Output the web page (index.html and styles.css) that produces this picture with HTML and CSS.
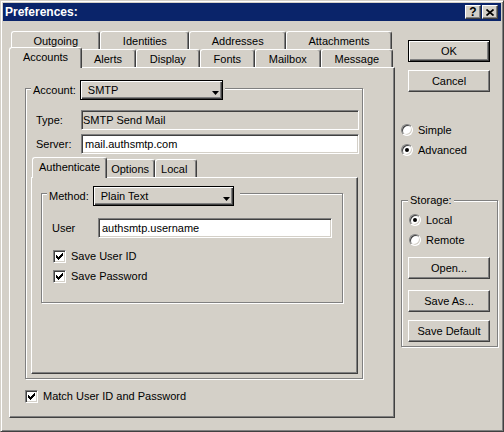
FILE: index.html
```html
<!DOCTYPE html>
<html lang="en">
<head>
    <meta charset="UTF-8">
    <meta name="viewport" content="width=device-width, initial-scale=1.0">
    <title>Preferences</title>
    <link rel="stylesheet" href="styles.css">
</head>
<body>
    <div class="window">
        <div class="titlebar">
            <span class="title">Preferences:</span>
            <div class="caption-buttons">
                <span class="cap-btn">?</span>
                <span class="cap-btn">
                    <svg width="8" height="7" viewBox="0 0 8 7"><path d="M0.5 0.5L7.5 6.5M7.5 0.5L0.5 6.5" stroke="#000" stroke-width="1.7"/></svg>
                </span>
            </div>
        </div>

        <div class="content">
            <div class="main">
                <div class="tab-row back">
                    <div class="tab">Outgoing</div>
                    <div class="tab">Identities</div>
                    <div class="tab">Addresses</div>
                    <div class="tab">Attachments</div>
                </div>
                <div class="tab-row front">
                    <div class="tab active">Accounts</div>
                    <div class="tab">Alerts</div>
                    <div class="tab">Display</div>
                    <div class="tab">Fonts</div>
                    <div class="tab">Mailbox</div>
                    <div class="tab">Message</div>
                </div>

                <div class="panel">
                    <div class="group account">
                        <div class="group-head">
                            <span>Account:</span>
                            <div class="dropdown account-select">
                                <span>SMTP</span>
                                <svg class="arrow" width="7" height="4" viewBox="0 0 7 4"><path d="M0 0h7L3.5 4z"/></svg>
                            </div>
                        </div>
                        <div class="field-row first">
                            <span class="field-label">Type:</span>
                            <input class="field readonly" value="SMTP Send Mail" readonly>
                        </div>
                        <div class="field-row">
                            <span class="field-label">Server:</span>
                            <input class="field" value="mail.authsmtp.com">
                        </div>

                        <div class="itab-row">
                            <div class="itab active">Authenticate</div>
                            <div class="itab">Options</div>
                            <div class="itab">Local</div>
                        </div>
                        <div class="ipanel">
                            <div class="group method">
                                <div class="group-head wide">
                                    <span>Method:</span>
                                    <div class="dropdown method-select">
                                        <span>Plain Text</span>
                                        <svg class="arrow" width="7" height="4" viewBox="0 0 7 4"><path d="M0 0h7L3.5 4z"/></svg>
                                    </div>
                                </div>
                                <div class="user-row">
                                    <span class="user-label">User</span>
                                    <input class="field user-field" value="authsmtp.username">
                                </div>
                                <div class="check-row save-id">
                                    <span class="check"><svg width="11" height="11" viewBox="0 0 11 11"><path d="M2 4h1v3h-1zM3 5h1v3h-1zM4 6h1v3h-1zM5 5h1v3h-1zM6 4h1v3h-1zM7 3h1v3h-1zM8 2h1v3h-1z"/></svg></span>
                                    <span>Save User ID</span>
                                </div>
                                <div class="check-row save-pw">
                                    <span class="check"><svg width="11" height="11" viewBox="0 0 11 11"><path d="M2 4h1v3h-1zM3 5h1v3h-1zM4 6h1v3h-1zM5 5h1v3h-1zM6 4h1v3h-1zM7 3h1v3h-1zM8 2h1v3h-1z"/></svg></span>
                                    <span>Save Password</span>
                                </div>
                            </div>
                        </div>
                    </div>

                    <div class="check-row match">
                        <span class="check"><svg width="11" height="11" viewBox="0 0 11 11"><path d="M2 4h1v3h-1zM3 5h1v3h-1zM4 6h1v3h-1zM5 5h1v3h-1zM6 4h1v3h-1zM7 3h1v3h-1zM8 2h1v3h-1z"/></svg></span>
                        <span>Match User ID and Password</span>
                    </div>
                </div>
            </div>

            <div class="side">
                <div class="btn default btn-ok">OK</div>
                <div class="btn btn-cancel">Cancel</div>

                <div class="radio-row mode-simple">
                    <span class="radio"></span>
                    <span>Simple</span>
                </div>
                <div class="radio-row">
                    <span class="radio on"></span>
                    <span>Advanced</span>
                </div>

                <div class="group storage">
                    <div class="group-head">Storage:</div>
                    <div class="radio-row first">
                        <span class="radio on"></span>
                        <span>Local</span>
                    </div>
                    <div class="radio-row">
                        <span class="radio"></span>
                        <span>Remote</span>
                    </div>
                    <div class="btn btn-open">Open...</div>
                    <div class="btn btn-saveas">Save As...</div>
                    <div class="btn btn-savedefault">Save Default</div>
                </div>
            </div>
        </div>
    </div>
</body>
</html>
```

FILE: styles.css
```css
body {
    margin: 0;
    font-family: "Liberation Sans", Arial, sans-serif;
    font-size: 11px;
    line-height: 13px;
    color: #000;
    background: #d4d0c8;
}
.window {
    width: 504px;
    height: 432px;
    box-sizing: border-box;
    display: flex;
    flex-direction: column;
    padding: 2px;
    border: 1px solid;
    border-color: #d4d0c8 #404040 #404040 #d4d0c8;
    box-shadow: inset 1px 1px #fff, inset -1px -1px #808080;
    background: #d4d0c8;
}

/* title bar */
.titlebar {
    flex: none;
    height: 18px;
    display: flex;
    align-items: center;
    justify-content: space-between;
    padding: 0 3px 0 2px;
    background: #0a246a;
}
.title {
    color: #fff;
    font-weight: bold;
    font-size: 12px;
}
.caption-buttons {
    display: flex;
    gap: 1px;
}
.cap-btn {
    width: 16px;
    height: 14px;
    box-sizing: border-box;
    display: flex;
    align-items: center;
    justify-content: center;
    background: #d4d0c8;
    border: 1px solid;
    border-color: #fff #404040 #404040 #fff;
    box-shadow: inset -1px -1px #808080;
    font-weight: bold;
    font-size: 12px;
}

.content {
    flex: 1;
    display: flex;
    gap: 6px;
    padding: 10px 3px 11px 6px;
}
.main {
    width: 386px;
    display: flex;
    flex-direction: column;
}
.side {
    width: 97px;
}

/* tabs */
.tab-row {
    display: flex;
    height: 18px;
    margin: 0 2px;
}
.tab-row.back {
    margin-right: 3px;
}
.tab, .itab {
    box-sizing: border-box;
    height: 18px;
    padding: 1px 6px 0;
    line-height: 16px;
    text-align: center;
    white-space: nowrap;
    border: 1px solid;
    border-bottom: 0;
    border-color: #fff #404040 #fff #fff;
    border-radius: 3px 3px 0 0;
    box-shadow: inset -1px 0 #808080;
    background: #d4d0c8;
}
.tab {
    flex: auto;
}
.itab {
    flex: none;
    padding: 1px 5px 0;
    min-width: 42px;
    text-align: left;
}
.tab.active, .itab.active {
    position: relative;
    z-index: 1;
    height: 21px;
    margin: -2px -2px -1px;
}
.itab.active {
    padding: 1px 6px 0;
}

.panel {
    flex: 1;
    box-sizing: border-box;
    padding: 20px 0 0 15px;
    border: 1px solid;
    border-color: #fff #404040 #404040 #fff;
    box-shadow: inset -1px -1px #808080;
}

/* group boxes */
.group {
    box-sizing: border-box;
    border: 1px solid #808080;
    box-shadow: inset 1px 1px #fff, 1px 1px #fff;
}
.group-head {
    display: flex;
    align-items: center;
    gap: 4px;
    width: max-content;
    padding: 0 2px;
    background: #d4d0c8;
}
.group-head.wide {
    padding-right: 6px;
}
.account {
    width: 338px;
    padding: 0 3px 4px 5px;
}
.account .group-head {
    margin-top: -9px;
}
.method {
    width: 302px;
    height: 110px;
    padding: 0 0 0 5px;
}
.method .group-head {
    margin-top: -8px;
}
.storage {
    height: 147px;
    margin-top: 40px;
    padding: 0 0 0 6px;
}
.storage .group-head {
    height: 13px;
    margin-top: -7px;
}

/* dropdowns */
.dropdown {
    display: flex;
    align-items: center;
    height: 20px;
    box-sizing: border-box;
    padding: 0 3px 0 7px;
    border: 1px solid #000;
    box-shadow: inset 1px 1px #fff, inset -1px -1px #404040, inset -2px -2px #808080;
}
.account-select {
    width: 143px;
}
.method-select {
    width: 141px;
}
.arrow {
    margin-left: auto;
    margin-top: 6px;
    display: block;
}

/* text fields */
.field-row {
    display: flex;
    align-items: center;
    margin-top: 4px;
}
.field-row.first {
    margin-top: 10px;
}
.field-label {
    width: 50px;
    box-sizing: border-box;
    padding-left: 5px;
}
.field {
    flex: 1;
    min-width: 0;
    height: 20px;
    box-sizing: border-box;
    margin: 0;
    padding: 0 3px;
    font: inherit;
    color: #000;
    background: #fff;
    border: 1px solid;
    border-color: #808080 #fff #fff #808080;
    box-shadow: inset 1px 1px #404040, inset -1px -1px #d4d0c8;
    outline: none;
}
.field.readonly {
    padding-left: 1px;
    background: #d4d0c8;
}

.itab-row {
    display: flex;
    height: 18px;
    margin: 5px 0 0 3px;
}
.ipanel {
    height: 197px;
    margin-right: 1px;
    box-sizing: border-box;
    padding: 15px 0 0 9px;
    border: 1px solid;
    border-color: #fff #404040 #404040 #fff;
    box-shadow: inset -1px -1px #808080;
}

.user-row {
    display: flex;
    align-items: center;
    margin-top: 12px;
}
.user-label {
    width: 51px;
    box-sizing: border-box;
    padding-left: 5px;
}
.user-field {
    flex: none;
    width: 234px;
}

/* checkboxes and radios */
.check-row {
    display: flex;
    align-items: center;
    gap: 5px;
    height: 13px;
}
.save-id {
    margin: 12px 0 0 6px;
}
.save-pw {
    margin: 7px 0 0 6px;
}
.match {
    margin-top: 11px;
}
.check {
    flex: none;
    width: 13px;
    height: 13px;
    box-sizing: border-box;
    border: 1px solid;
    border-color: #808080 #fff #fff #808080;
    box-shadow: inset 1px 1px #404040, inset -1px -1px #d4d0c8;
    background: #fff;
}
.check svg {
    display: block;
}
.radio-row {
    display: flex;
    align-items: center;
    gap: 5px;
    height: 20px;
}
.mode-simple {
    margin-top: 28px;
}
.storage .radio-row {
    margin-left: 1px;
}
.storage .radio-row.first {
    margin-top: 3px;
}
.radio {
    flex: none;
    width: 12px;
    height: 12px;
    box-sizing: border-box;
    display: flex;
    align-items: center;
    justify-content: center;
    border-radius: 50%;
    border: 1px solid;
    border-color: #808080 #fff #fff #808080;
    box-shadow: inset 1px 1px #404040, inset -1px -1px #d4d0c8;
    background: #fff;
}
.radio.on::after {
    content: "";
    width: 4px;
    height: 4px;
    border-radius: 50%;
    background: #000;
}

/* buttons */
.btn {
    display: flex;
    align-items: center;
    justify-content: center;
    width: 82px;
    height: 22px;
    box-sizing: border-box;
    border: 1px solid;
    border-color: #fff #404040 #404040 #fff;
    box-shadow: inset -1px -1px #808080;
}
.btn.default {
    border-color: #000;
    box-shadow: inset 1px 1px #fff, inset -1px -1px #404040, inset -2px -2px #808080;
}
.side > .btn {
    margin-left: 7px;
}
.btn-ok {
    margin-top: 9px;
}
.btn-cancel {
    margin-top: 8px;
}
.btn-open {
    margin-top: 7px;
}
.btn-saveas {
    margin-top: 11px;
}
.btn-savedefault {
    margin-top: 8px;
}
```
